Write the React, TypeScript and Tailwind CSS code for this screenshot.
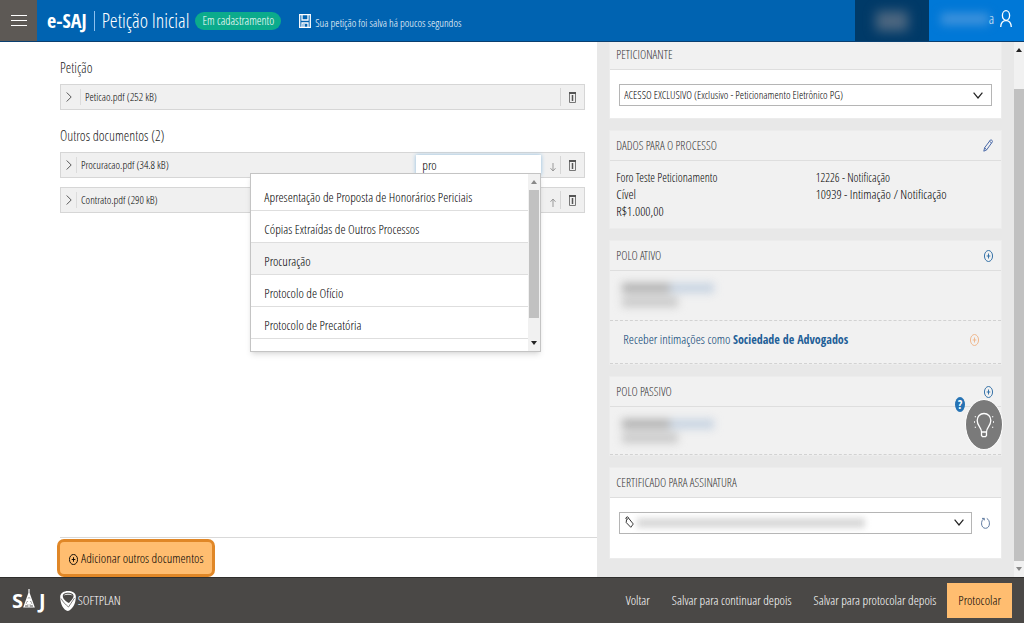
import React, { useState } from "react";

const suggestions = [
  "Apresentação de Proposta de Honorários Periciais",
  "Cópias Extraídas de Outros Processos",
  "Procuração",
  "Protocolo de Ofício",
  "Protocolo de Precatória",
];

function PlusCircle({ className }: { className?: string }) {
  return (
    <svg viewBox="0 0 20 24" preserveAspectRatio="none" fill="none" stroke="currentColor" strokeWidth="2" className={className}>
      <ellipse cx="10" cy="12" rx="9" ry="11" />
      <path d="M10 7v10M6 12h8" />
    </svg>
  );
}

function ChevronRight() {
  return (
    <svg viewBox="0 0 6 10" fill="none" stroke="#555" strokeWidth="1" className="h-2.5 w-1.5">
      <path d="M.7.5 5.2 5 .7 9.5" />
    </svg>
  );
}

function ChevronDown({ className }: { className?: string }) {
  return (
    <svg viewBox="0 0 10 7" fill="none" stroke="#222" strokeWidth="1.2" className={className}>
      <path d="M.6.7 5 6 9.400.7" />
    </svg>
  );
}

function TrashIcon() {
  return (
    <svg viewBox="0 0 7 11" fill="none" stroke="#777" strokeWidth="1" className="h-[11px] w-[7px]">
      <path d="M.5 1v9.500h6V1" />
      <path d="M0 1h7" stroke="#555" strokeWidth="2" />
      <path d="M3.500 3v6" stroke="#555" strokeWidth="1.500" />
    </svg>
  );
}

function MoveIcon({ up }: { up?: boolean }) {
  return (
    <svg viewBox="0 0 6 9" fill="none" stroke="#999" strokeWidth="1" className="h-[9px] w-1.5">
      {up ? <path d="M3 9V1M.5 3.800 3 1l2.500 2.800" /> : <path d="M3 0v8M.5 5.200 3 8l2.500-2.800" />}
    </svg>
  );
}

function DocumentRow({ name, wide, move, children }: { name: string; wide?: boolean; move?: "up" | "down"; children?: React.ReactNode }) {
  return (
    <li className="flex h-[26px] items-center border border-[#d6d6d6] bg-[#f0f0f0]">
      <button aria-label={"Expandir " + name} className={"flex h-4 items-center border-r border-[#dcdcdc] pl-[5px] " + (wide ? "w-5" : "w-4")}>
        <ChevronRight />
      </button>
      <span className="flex-1 pl-1 text-[11px] text-black">{name}</span>
      {children}
      {move && (
        <button aria-label={move === "up" ? "Mover para cima" : "Mover para baixo"} className="flex w-[19px] justify-center pt-1 pl-1">
          <MoveIcon up={move === "up"} />
        </button>
      )}
      <button aria-label={"Excluir " + name} className="flex h-[18px] w-6 items-center justify-center border-l border-[#d6d6d6]">
        <TrashIcon />
      </button>
    </li>
  );
}

function Panel({ title, action, children }: { title: string; action?: React.ReactNode; children: React.ReactNode }) {
  return (
    <section className="relative border border-[#ececec] bg-[#f1f1f1]">
      <div className="flex h-[30px] items-center justify-between border-b border-[#dedede] pr-2 pl-1.5">
        <h2 className="text-xs text-[#333]">{title}</h2>
        {action}
      </div>
      {children}
    </section>
  );
}

function BlurredPerson() {
  return (
    <div aria-hidden="true" className="flex flex-col gap-1 pt-3 pl-3 blur-[4px]">
      <div className="flex">
        <div className="h-2.5 w-12 bg-[#b2b2b2]" />
        <div className="h-2.5 w-11 bg-[#c8d4e2]" />
      </div>
      <div className="h-2.5 w-14 bg-[#c9c9c9]" />
    </div>
  );
}

function Header() {
  return (
    <header className="relative z-10 flex h-[42px] border-b border-[#0a3f70] bg-[#0063b1] text-white">
      <button aria-label="Menu" className="flex w-[37px] flex-col items-center justify-center gap-1 bg-[#5d5955]">
        <span className="h-px w-4 bg-white" />
        <span className="h-px w-4 bg-white" />
        <span className="h-px w-4 bg-white" />
      </button>
      <div className="flex items-center pl-2.5">
        <h1 className="flex items-center text-xl">
          <span className="font-['Open_Sans_Condensed'] font-bold">e-SAJ</span>
          <span className="mx-[7px] h-5 w-px bg-[#8cc0ee]" />
          <span>Petição Inicial</span>
        </h1>
        <span className="ml-1.5 rounded-full bg-[#0bab8c] px-[7px] text-xs leading-[18px]">Em cadastramento</span>
        <svg viewBox="0 0 12 14" className="ml-[18px] h-3.5 w-3" fill="none" stroke="white" strokeWidth="1.300">
          <path d="M.7.7h10.600v12.600H.7zM3 1v5h6V1M3 13V9h6v4M5 10v3" />
        </svg>
        <p className="pt-1.5 pl-1 text-[11px]">Sua petição foi salva há poucos segundos</p>
      </div>
      <div className="ml-auto flex w-[74px] items-center justify-center bg-[#003a68]">
        <div className="h-5 w-8 bg-[#4d6780] blur-[6px]" />
      </div>
      <button aria-label="Usuário" className="flex w-[95px] items-center justify-end bg-[#0078d7] pr-3 pb-1">
        <span className="h-3 w-12 bg-[#3d92dc] blur-[5px]" />
        <span className="mr-1.5 text-sm">a</span>
        <svg viewBox="0 0 12 17" className="h-[17px] w-3" fill="none" stroke="white" strokeWidth="1.300">
          <ellipse cx="6" cy="5.500" rx="3.600" ry="4.800" />
          <path d="M.7 17c.2-4 2-6.300 5.300-6.300s5.100 2.300 5.300 6.300" />
        </svg>
      </button>
    </header>
  );
}

function Footer() {
  return (
    <footer className="flex h-[46px] items-center border-t border-[#2f2e2d] bg-[#4a4846] px-3 text-white">
      <div className="flex items-center font-['Open_Sans'] text-xl font-bold">
        <span>S</span>
        <svg viewBox="0 0 12 19" className="-mt-1 h-[19px] w-3" fill="none" stroke="white" strokeWidth="1.200">
          <path d="M6 0v7M6 4 1 18h10L6 4M4 10h4M3 13h6M2 16h8M4 10l5 6M8 10l-5 6M6 7v11" />
        </svg>
        <span className="pl-1">J</span>
      </div>
      <svg viewBox="0 0 16 20" className="ml-3.5 h-5 w-4">
        <path fill="white" d="M8 0c4 0 7.500 1.800 7.800 5 .3 5-1.500 11.500-6.500 14.500-1 .6-2 .6-3 0C2 17 .2 11 .2 6 .2 2 4 0 8 0z" />
        <path fill="#4a4846" d="M8 1.800c3 0 5.600 1 5.600 3.200S11 9.500 9 12C6 10.500 2.800 8 2.800 5 2.800 2.800 5.400 1.800 8 1.800z" />
        <path fill="white" d="M3.500 4.500c2-2.300 7-2.300 9.300 0-2.300-1-7-1-9.300 0z" />
        <path d="M1 7.500c2 3.500 4.500 6 7.500 8.500l6-9" stroke="#4a4846" strokeWidth=".7" fill="none" />
      </svg>
      <span className="pl-0.5 text-[13px]">SOFTPLAN</span>
      <nav className="ml-auto flex items-center gap-[22px] text-[13px]">
        <button>Voltar</button>
        <button>Salvar para continuar depois</button>
        <button>Salvar para protocolar depois</button>
        <button className="-ml-[11px] h-[35px] bg-[#ffbd70] px-[11px] text-black">Protocolar</button>
      </nav>
    </footer>
  );
}

function DocumentType() {
  const [text, setText] = useState("pro");

  return (
    <div className="relative h-5 w-[125px]">
      <input
        aria-label="Tipo do documento"
        value={text}
        onChange={e => setText(e.target.value)}
        className="block h-5 w-full bg-white px-1.5 text-[13px] text-black shadow-[0_0_4px_#8ebde0] outline-none"
      />
      <div className="absolute top-[18px] right-0 z-10 flex h-[179px] w-[291px] border border-[#c4c4c4] bg-white shadow-md">
        <ul className="flex-1 overflow-hidden pt-[5px]">
          {suggestions.map((item, i) => (
            <li key={item} className={"border-b border-[#dedede] " + (i === 2 ? "bg-[#f3f3f3]" : "")}>
              <button onClick={() => setText(item)} className="block h-[31px] w-full pt-1.5 pl-[13px] text-left text-[13px] text-black">
                {item}
              </button>
            </li>
          ))}
        </ul>
        <div className="flex w-3 flex-col items-center bg-[#f1f1f1] py-1.5">
          <svg viewBox="0 0 6 4" className="h-1 w-1.5" fill="#888"><path d="M3 0l3 4H0z" /></svg>
          <div className="mt-1.5 h-32 w-2.5 bg-[#c1c1c1]" />
          <svg viewBox="0 0 6 4" className="mt-auto h-1 w-1.5" fill="#222"><path d="M3 4L0 0h6z" /></svg>
        </div>
      </div>
    </div>
  );
}

export default function App() {
  return (
    <div className="flex min-h-screen flex-col bg-white font-['Open_Sans_Condensed_Light','Open_Sans_Condensed','Liberation_Sans_Narrow',sans-serif] font-light">
      <Header />
      <div className="flex flex-1">
        <main className="flex w-7/12 flex-col pt-4 pl-[60px]">
          <div className="flex-1 pr-3">
            <h2 className="text-sm text-[#222]">Petição</h2>
            <ul className="pt-1.5">
              <DocumentRow name="Peticao.pdf (252 kB)" wide />
            </ul>
            <h2 className="pt-4 text-sm text-[#222]">Outros documentos (2)</h2>
            <ul className="flex flex-col gap-[9px] pt-1.5">
              <DocumentRow name="Procuracao.pdf (34.8 kB)" move="down">
                <DocumentType />
              </DocumentRow>
              <DocumentRow name="Contrato.pdf (290 kB)" move="up" />
            </ul>
          </div>
          <div className="border-t border-[#d9d9d9] pt-1 pb-[3px]">
            <button className="flex h-8 items-center gap-[3px] rounded-sm bg-[#ffbd70] px-[9px] pt-0.5 text-[13px] text-black ring-[3px] ring-[#e08727]">
              <PlusCircle className="h-[11px] w-[9px]" />
              Adicionar outros documentos
            </button>
          </div>
        </main>
        <aside className="flex w-5/12 bg-[#e8e8e8]">
          <div className="-mt-[3px] flex flex-1 flex-col gap-[11px] pr-3 pb-[18px] pl-3">
            <Panel title="PETICIONANTE">
              <div className="relative bg-white px-[9px] pt-3.5 pb-3">
                <select aria-label="Peticionante" className="block h-[22px] w-full appearance-none border border-[#b5b5b5] bg-white px-1 text-[11px] text-black">
                  <option>ACESSO EXCLUSIVO (Exclusivo - Peticionamento Eletrônico PG)</option>
                </select>
                <ChevronDown className="pointer-events-none absolute top-[22px] right-[18px] h-[7px] w-2.5" />
              </div>
            </Panel>
            <Panel
              title="DADOS PARA O PROCESSO"
              action={
                <button aria-label="Editar">
                  <svg viewBox="0 0 10 13" className="h-[13px] w-2.5" fill="none" stroke="#4a69a8" strokeWidth="1">
                    <path d="M.8 12.200 1.600 8.800 7.400 1c.6-.7 2.600.8 2 1.800L3.700 10.800zM1.600 8.800l2.100 2M6.500 2.300l2 1.600" />
                  </svg>
                </button>
              }
            >
              <div className="grid grid-cols-2 px-1.5 pt-2 pb-2 text-xs leading-[17px] text-black">
                <div>
                  <p>Foro Teste Peticionamento</p>
                  <p className="text-[13px]">Cível</p>
                  <p className="text-[13px]">R$1.000,00</p>
                </div>
                <div className="pl-2.5">
                  <p>12226 - Notificação</p>
                  <p className="text-[13px]">10939 - Intimação / Notificação</p>
                </div>
              </div>
            </Panel>
            <Panel title="POLO ATIVO" action={<button aria-label="Adicionar polo ativo" className="text-[#2f6ea5]"><PlusCircle className="h-3 w-[9px]" /></button>}>
              <div className="h-[49px]"><BlurredPerson /></div>
              <div className="flex h-11 items-center justify-between border-y border-dashed border-[#d2d2d2] pr-[22px] pb-1 pl-[13px]">
                <a href="#sociedade" className="text-[13px] text-[#003a70]">
                  Receber intimações como <b className="font-['Open_Sans_Condensed'] text-xs font-bold text-[#1f5f98]">Sociedade de Advogados</b>
                </a>
                <button aria-label="Adicionar sociedade" className="text-[#efb58a]"><PlusCircle className="h-3 w-[9px]" /></button>
              </div>
            </Panel>
            <Panel title="POLO PASSIVO" action={<button aria-label="Adicionar polo passivo" className="text-[#2f6ea5]"><PlusCircle className="h-3 w-[9px]" /></button>}>
              <div className="h-12 border-b border-dashed border-[#d2d2d2]"><BlurredPerson /></div>
              <button aria-label="Ajuda" className="absolute top-5 right-9 flex h-[15px] w-2.5 items-center justify-center rounded-[50%] bg-[#2673b4] font-['Open_Sans_Condensed'] text-xs font-bold text-white">?</button>
              <button aria-label="Dicas" className="absolute top-[22px] -right-0.5 flex h-[51px] w-[38px] items-center justify-center rounded-[50%] border border-white bg-[#7a7a7a]">
                <svg viewBox="0 0 20 26" className="h-[26px] w-5" fill="none" stroke="white" strokeWidth="1.300">
                  <path d="M7.500 20c0-5-4.300-6-4.300-11.500C3.200 4.500 6 1.500 10 1.500s6.800 3 6.800 7c0 5.500-4.300 6.500-4.300 11.500zM7.500 20v3.500l1 1.200h3l1-1.200V20" />
                  <path d="M0 10h1M19 10h1M.8 4.500l1 .5M19.200 4.500l-1 .5M.8 15.500l1-.5M19.200 15.500l-1-.5" />
                </svg>
              </button>
            </Panel>
            <Panel title="CERTIFICADO PARA ASSINATURA">
              <div className="flex bg-white px-[9px] pt-3.5 pb-6">
                <div className="relative flex-1">
                  <select aria-label="Certificado para assinatura" className="block h-[22px] w-full appearance-none border border-[#b5b5b5] bg-white" />
                  <svg viewBox="0 0 9 12" className="pointer-events-none absolute top-1 left-1.5 h-3 w-[9px]" fill="none" stroke="#333" strokeWidth="1">
                    <path d="M1.500 3.800 3.600 2.200 8.300 8 5.800 11.300 1.200 6.500zM1.800 3.500.7 2 2.500.7l1.300 1.500" />
                  </svg>
                  <div className="pointer-events-none absolute top-1.5 left-[18px] h-2.5 w-[228px] bg-[#d9d9d9] blur-[3px]" />
                  <ChevronDown className="pointer-events-none absolute top-[7px] right-2 h-[7px] w-2.5" />
                </div>
                <button aria-label="Atualizar certificados" className="pr-0.5 pl-[9px]">
                  <svg viewBox="0 0 9 12" className="h-3 w-[9px]" fill="none" stroke="#607ba0" strokeWidth="1">
                    <path d="M3.200 1.500C-.5 3-.5 11.300 4.500 11.300S9.500 3 5.800 1.500M1 1.400h2.300v2" />
                  </svg>
                </button>
              </div>
            </Panel>
          </div>
          <div className="flex w-2.5 flex-col items-center bg-[#f1f1f1] py-1.5">
            <svg viewBox="0 0 6 4" className="h-1 w-1.5" fill="#222"><path d="M3 0l3 4H0z" /></svg>
            <div className="mt-[37px] w-full flex-1 bg-[#c1c1c1]" />
            <svg viewBox="0 0 6 4" className="mt-1.5 h-1 w-1.5" fill="#888"><path d="M3 4L0 0h6z" /></svg>
          </div>
        </aside>
      </div>
      <Footer />
    </div>
  );
}
